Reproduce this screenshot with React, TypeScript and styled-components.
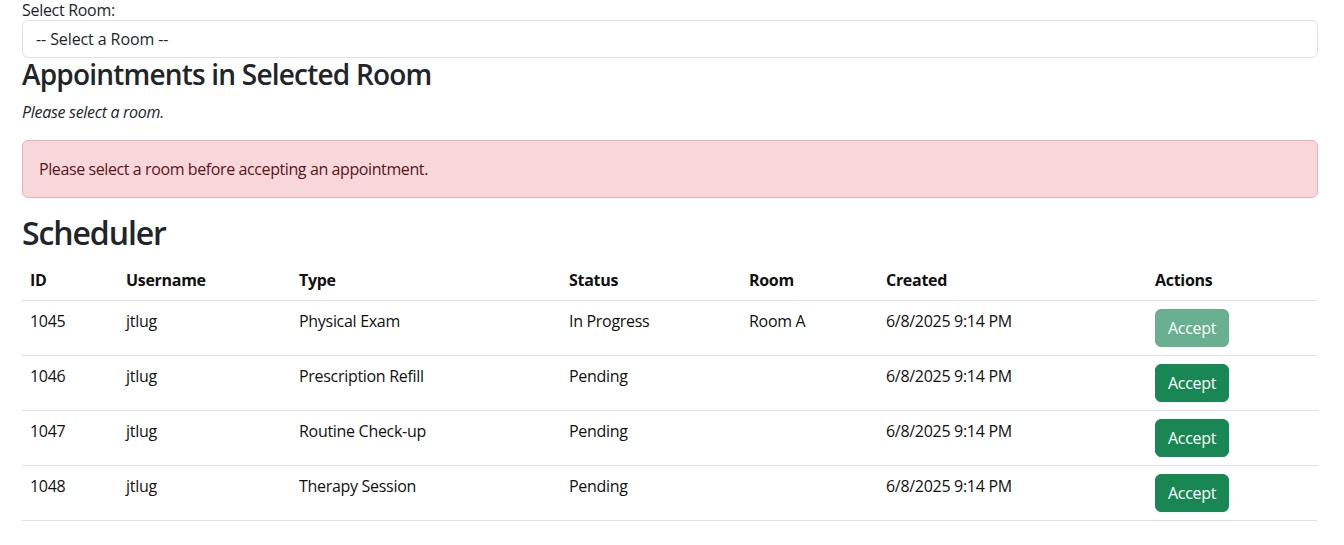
import React from "react";
import styled, { createGlobalStyle } from "styled-components";

const FONT = `"Open Sans", "Noto Sans", "Liberation Sans", sans-serif`;

const GlobalStyle = createGlobalStyle`
  html, body { margin: 0; padding: 0; background: #fff; }
  body {
    font-family: ${FONT};
    font-size: 16px;
    line-height: 1.5;
    letter-spacing: -0.3px;
    color: #212529;
  }
  * { box-sizing: border-box; }
`;

const Page = styled.div`
  width: 1296px;
  margin-left: 22px;
`;

const Label = styled.label`
  display: block;
  line-height: 20px;
  height: 20px;
  font-size: 16px;
`;

const Select = styled.select`
  display: block;
  width: 100%;
  height: 38px;
  padding: 6px 13px;
  font-family: ${FONT};
  font-size: 16px;
  line-height: 24px;
  letter-spacing: -0.1px;
  color: #212529;
  background: #fff;
  border: 1px solid #dee2e6;
  border-radius: 6px;
  appearance: none;
  -webkit-appearance: none;
  outline: none;
`;

const H3 = styled.h3`
  margin: 0 0 8px;
  font-size: 28px;
  font-weight: 600;
  line-height: 1.2;
  letter-spacing: -0.8px;
`;

const H2 = styled.h2`
  margin: 0 0 8px;
  font-size: 32px;
  font-weight: 600;
  line-height: 1.2;
  letter-spacing: -1.1px;
`;

const Note = styled.p`
  margin: 0 0 16px;
  font-style: italic;
`;

const Alert = styled.div`
  padding: 16px;
  margin-bottom: 16px;
  border: 1px solid #f1aeb5;
  border-radius: 6px;
  background: #f8d7da;
  color: #58151c;
  letter-spacing: -0.4px;
`;

const Table = styled.table`
  width: 100%;
  border-collapse: collapse;
  margin-bottom: 16px;
  color: #111;
`;

const Th = styled.th`
  text-align: left;
  font-weight: 700;
  padding: 8px;
  border-bottom: 1px solid #dee2e6;
  vertical-align: bottom;
`;

const Td = styled.td`
  padding: 8px;
  border-bottom: 1px solid #dee2e6;
  vertical-align: top;
  height: 55px;
`;

const Button = styled.button<{ $disabled?: boolean }>`
  display: inline-block;
  padding: 6px 12px;
  font-family: ${FONT};
  font-size: 16px;
  line-height: 24px;
  letter-spacing: -0.3px;
  color: #fff;
  background: #198754;
  border: 1px solid #198754;
  border-radius: 6px;
  cursor: pointer;
  opacity: ${(p) => (p.$disabled ? 0.65 : 1)};
`;

const widths = [96, 173, 270, 180, 137, 269, 171];

const rows = [
  { id: 1045, user: "jtlug", type: "Physical Exam", status: "In Progress", room: "Room A", created: "6/8/2025 9:14 PM", disabled: true },
  { id: 1046, user: "jtlug", type: "Prescription Refill", status: "Pending", room: "", created: "6/8/2025 9:14 PM", disabled: false },
  { id: 1047, user: "jtlug", type: "Routine Check-up", status: "Pending", room: "", created: "6/8/2025 9:14 PM", disabled: false },
  { id: 1048, user: "jtlug", type: "Therapy Session", status: "Pending", room: "", created: "6/8/2025 9:14 PM", disabled: false },
];

export default function App() {
  return (
    <>
      <GlobalStyle />
      <Page>
        <Label htmlFor="room">Select Room:</Label>
        <Select id="room" defaultValue="">
          <option value="">-- Select a Room --</option>
          <option value="a">Room A</option>
        </Select>
        <H3>Appointments in Selected Room</H3>
        <Note>Please select a room.</Note>
        <Alert>Please select a room before accepting an appointment.</Alert>
        <H2>Scheduler</H2>
        <Table>
          <colgroup>
            {widths.map((w, i) => (
              <col key={i} style={{ width: w }} />
            ))}
          </colgroup>
          <thead>
            <tr>
              <Th>ID</Th>
              <Th>Username</Th>
              <Th>Type</Th>
              <Th>Status</Th>
              <Th>Room</Th>
              <Th>Created</Th>
              <Th>Actions</Th>
            </tr>
          </thead>
          <tbody>
            {rows.map((r) => (
              <tr key={r.id}>
                <Td>{r.id}</Td>
                <Td>{r.user}</Td>
                <Td>{r.type}</Td>
                <Td>{r.status}</Td>
                <Td>{r.room}</Td>
                <Td>{r.created}</Td>
                <Td>
                  <Button $disabled={r.disabled} disabled={r.disabled}>Accept</Button>
                </Td>
              </tr>
            ))}
          </tbody>
        </Table>
      </Page>
    </>
  );
}
